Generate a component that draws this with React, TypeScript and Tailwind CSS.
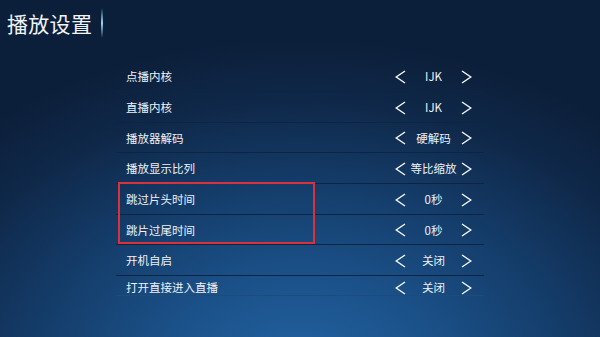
import React from 'react';

interface SettingRow {
    label: string;
    value: string;
}

const rows: SettingRow[] = [
    { label: '点播内核', value: 'IJK' },
    { label: '直播内核', value: 'IJK' },
    { label: '播放器解码', value: '硬解码' },
    { label: '播放显示比列', value: '等比缩放' },
    { label: '跳过片头时间', value: '0秒' },
    { label: '跳片过尾时间', value: '0秒' },
    { label: '开机自启', value: '关闭' },
    { label: '打开直接进入直播', value: '关闭' },
];

function Chevron({ dir }: { dir: 'left' | 'right' }) {
    return (
        <svg width="11" height="14" viewBox="0 0 11 14" className="block">
            <path
                d={dir === 'left' ? 'M10 1 L1.2 7 L10 13' : 'M1 1 L9.8 7 L1 13'}
                fill="none"
                stroke="#f2f5f8"
                strokeWidth="1.5"
                strokeLinejoin="miter"
            />
        </svg>
    );
}

export default function App() {
    return (
        <div
            className="relative w-[600px] h-[337px] overflow-hidden text-[#eef2f6] bg-[radial-gradient(ellipse_78%_100%_at_50%_112%,#2364a4_0%,#1b5189_30%,#143c69_58%,#0f2849_82%,#0c1f3a_100%)]"
            style={{ fontFamily: '"Noto Sans CJK SC", "Noto Sans", sans-serif' }}
        >
            {/* header */}
            <div className="flex items-center h-[46px] pl-[7px]">
                <h1 className="text-[21px] leading-none font-normal text-[#f1f4f7] tracking-[0.3px]">播放设置</h1>
                <div className="ml-[9px] w-[2px] h-[30px] bg-[linear-gradient(to_bottom,transparent,#9fd6f2_50%,transparent)]" />
            </div>

            {/* settings list */}
            <div className="relative ml-[116px] mt-[15.3px] w-[368px]">
                {rows.map((row, i) => {
                    const last = i === rows.length - 1;
                    return (
                        <div
                            key={row.label}
                            className={
                                last
                                    ? 'flex items-center h-[20px] pt-[5px] border-b border-[#1d4c7c]'
                                    : 'flex items-center h-[30.67px] pt-[2px] border-b border-[#0d2542]'
                            }
                        >
                            <span className="pl-[10px] text-[11.5px] leading-none flex-1">{row.label}</span>
                            <div className="flex items-center pr-[12px]">
                                <Chevron dir="left" />
                                <span className="w-[55px] text-center text-[11.5px] leading-none">{row.value}</span>
                                <Chevron dir="right" />
                            </div>
                        </div>
                    );
                })}

                {/* highlight box */}
                <div className="absolute left-[2px] top-[120.7px] w-[197px] h-[62px] border-2 border-[#d8333c]" />
            </div>
        </div>
    );
}
